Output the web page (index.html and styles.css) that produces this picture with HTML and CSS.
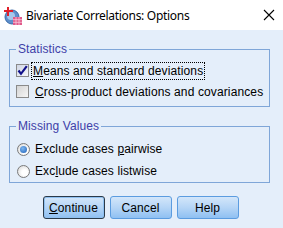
FILE: index.html
```html
<!DOCTYPE html>
<html>
<head>
<meta charset="utf-8">
<link rel="stylesheet" href="styles.css">
</head>
<body>
<div class="window">
  <div class="titlebar">
    <svg class="appicon" width="20" height="20" viewBox="0 0 20 20">
      <circle cx="9" cy="11" r="7" fill="#5d8fcb" stroke="#3a6aa8" stroke-width="1"/>
      <circle cx="8" cy="10" r="4" fill="#a6c8ec"/>
      <rect x="10" y="11" width="9" height="8" fill="#e05a8a"/>
      <path d="M10 13.7h9M10 16.3h9M13 11v8M16 11v8" stroke="#f7c9dc" stroke-width="0.8"/>
      <rect x="4" y="1" width="2" height="9" fill="#e0202a"/>
      <rect x="1" y="4" width="9" height="2" fill="#e0202a"/>
    </svg>
    <span class="title">Bivariate Correlations: Options</span>
    <svg class="close" width="12" height="12" viewBox="0 0 12 12">
      <path d="M1 1L11 11M11 1L1 11" stroke="#000" stroke-width="1.1"/>
    </svg>
  </div>
  <div class="content">
    <div class="group">
      <span class="legend">Statistics</span>
      <div class="row">
        <span class="check checked">
          <svg width="11" height="11" viewBox="0 0 11 11"><path d="M1.5 5.5L4 8.8L9.8 1.2" fill="none" stroke="#10108a" stroke-width="2.2"/></svg>
        </span>
        <span class="label focus"><u>M</u>eans and standard deviations</span>
      </div>
      <div class="row">
        <span class="check"></span>
        <span class="label"><u>C</u>ross-product deviations and covariances</span>
      </div>
    </div>
    <div class="group second">
      <span class="legend">Missing Values</span>
      <div class="row r2">
        <span class="radio on"><span class="dot"></span></span>
        <span class="label">Exclude cases <u>p</u>airwise</span>
      </div>
      <div class="row r2">
        <span class="radio"></span>
        <span class="label">Exc<u>l</u>ude cases listwise</span>
      </div>
    </div>
    <div class="buttons">
      <button class="btn default"><u>C</u>ontinue</button>
      <button class="btn">Cancel</button>
      <button class="btn">Help</button>
    </div>
  </div>
</div>
</body>
</html>
```
FILE: styles.css
```css
html, body {
  margin: 0;
  padding: 0;
}
body {
  width: 283px;
  height: 228px;
  overflow: hidden;
  font-family: "Liberation Sans", Arial, sans-serif;
  font-size: 12px;
  color: #000;
}
.window {
  width: 283px;
  height: 228px;
  display: flex;
  flex-direction: column;
}
.titlebar {
  height: 30px;
  background: #fff;
  display: flex;
  align-items: center;
  flex-shrink: 0;
}
.appicon {
  margin-left: 3px;
  margin-top: 1px;
}
.title {
  margin-left: 3px;
  font-family: "Noto Sans", "Open Sans", sans-serif;
  font-size: 12px;
  color: #000;
  flex: 1;
  letter-spacing: -0.3px;
}
.close {
  margin-right: 8px;
}
.content {
  flex: 1;
  background: #e4eefa;
  padding: 19px 13px 0 9px;
}
.group {
  position: relative;
  border: 1px solid #7fa6d8;
  padding: 10px 6px 4px 6px;
}
.group.second {
  margin-top: 19px;
  padding-top: 11px;
  padding-bottom: 0;
}
.legend {
  position: absolute;
  top: -9px;
  left: 6px;
  padding: 0 2px;
  background: #e4eefa;
  color: #4040a8;
  line-height: 16px;
  letter-spacing: 0.1px;
}
.row {
  height: 21px;
  display: flex;
  align-items: center;
  white-space: nowrap;
}
.row.r2 {
  height: 22px;
}
.check {
  width: 11px;
  height: 11px;
  border: 1px solid #8a8a8a;
  background: linear-gradient(135deg, #d4d4d4, #f6f6f6);
  display: flex;
  align-items: center;
  justify-content: center;
  flex-shrink: 0;
}
.check.checked {
  background: linear-gradient(135deg, #d0d6e4, #f4f6fb);
}
.label {
  margin-left: 4px;
  padding: 1px 1px;
  border: 1px solid transparent;
  letter-spacing: 0.12px;
  white-space: nowrap;
}
.label.focus {
  border: 1px dotted #000;
  margin-left: 2px;
}
.radio {
  width: 11px;
  height: 11px;
  border-radius: 50%;
  border: 1px solid #7a7a7a;
  background: radial-gradient(circle at 60% 60%, #ffffff 30%, #d0d0d0 100%);
  display: flex;
  align-items: center;
  justify-content: center;
  flex-shrink: 0;
  margin-left: 1px;
}
.radio .dot {
  width: 7px;
  height: 7px;
  border-radius: 50%;
  background: radial-gradient(circle at 40% 35%, #7fb8f0, #1d5fb8);
}
.radio + .label {
  margin-left: 3px;
}
.buttons {
  display: flex;
  justify-content: center;
  gap: 5px;
  margin-top: 13px;
  padding-left: 2px;
}
.btn {
  width: 62px;
  height: 23px;
  font-family: "Liberation Sans", Arial, sans-serif;
  font-size: 12px;
  color: #000;
  border: 1px solid #5b9ce0;
  border-radius: 3px;
  background: linear-gradient(#d3e6fa, #b5d5f6 50%, #8fc0f2);
  padding: 0;
  letter-spacing: 0.1px;
}
.btn.default {
  border: 1px solid #2a3a4a;
  box-shadow: inset 0 0 0 1px #8fc0f0;
}
u {
  text-decoration: underline;
  text-underline-offset: 1px;
}
```
